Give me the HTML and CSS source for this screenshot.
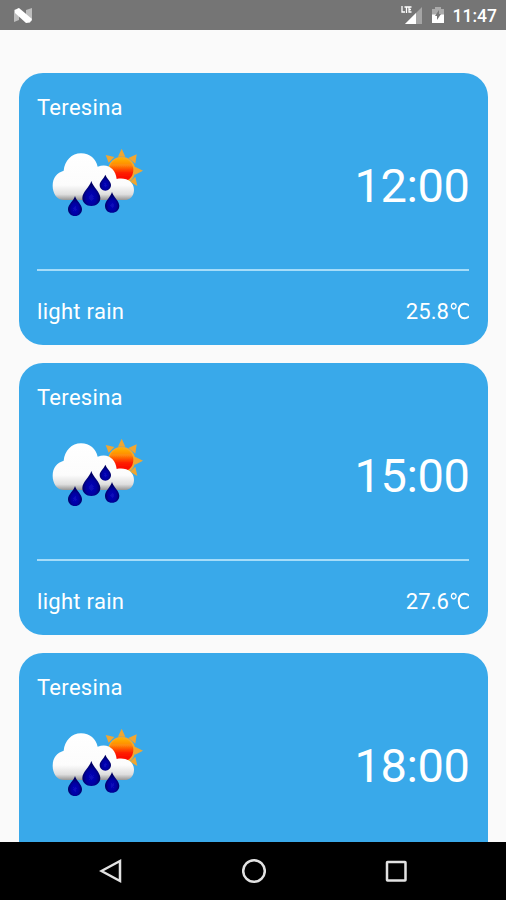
FILE: index.html
```html
<!DOCTYPE html>
<html lang="en">
<head>
<meta charset="utf-8">
<title>Forecast</title>
<link rel="stylesheet" href="styles.css">
</head>
<body>
<svg class="defs" width="0" height="0" aria-hidden="true">
  <defs>
    <linearGradient id="sun" x1="0" y1="0" x2="0" y2="1">
      <stop offset="0" stop-color="#ffb400"/><stop offset=".3" stop-color="#ff8a08"/><stop offset=".62" stop-color="#ff1c00"/><stop offset="1" stop-color="#f80000"/>
    </linearGradient>
    <linearGradient id="cloud" gradientUnits="userSpaceOnUse" x1="0" y1="40" x2="0" y2="180">
      <stop offset="0" stop-color="#fff"/><stop offset=".68" stop-color="#fcfcfc"/><stop offset=".88" stop-color="#dedede"/><stop offset="1" stop-color="#989898"/>
    </linearGradient>
    <radialGradient id="drop" cx=".5" cy=".65" r=".5">
      <stop offset="0" stop-color="#0808c0"/><stop offset=".6" stop-color="#0404a0"/><stop offset="1" stop-color="#000064"/>
    </radialGradient>
    <filter id="soft" x="-10%" y="-10%" width="120%" height="120%"><feGaussianBlur stdDeviation="1.5"/></filter>
    <symbol id="rain" viewBox="0 0 345 255">
      <g filter="url(#soft)">
        <path fill="#f0a632" d="M245 26l11 24H234zM290 43l-4 28-21-17zM309 92l-24 12v-24zM292 138l-22-13 16-15zM197 45l26 6-17 17z"/>
        <circle cx="245" cy="91" r="41" fill="#f5a82c"/>
        <circle cx="244" cy="90" r="36" fill="url(#sun)"/>
        <path fill="url(#cloud)" d="M72 180c-22 0-34-21-34-43 0-24 13-39 33-45 3-30 24-52 52-52 27 0 45 17 50 40 30-12 54 6 57 37 29-6 52 8 52 32 0 19-12 31-28 31z"/>
        <g fill="url(#drop)">
          <path d="M154 123c5 18 27 33 27 51 0 14-12 24-27 24s-27-10-27-24c0-18 22-33 27-51z"/>
          <path d="M196 104c4 11 17 20 17 31 0 10-8 17-17 17s-17-7-17-17c0-11 13-20 17-31z"/>
          <path d="M105 168c4 14 21 26 21 39 0 13-9 21-21 21s-21-8-21-21c0-13 17-25 21-39z"/>
          <path d="M216 156c4 15 22 27 22 41 0 13-10 21-22 21s-21-8-21-21c0-14 17-26 21-41z"/>
        </g>
      </g>
    </symbol>
  </defs>
</svg>
<div class="screen">
  <header class="status">
    <svg class="logo" viewBox="0 0 20 18"><path fill="#bdbdbd" d="M1 4l5-2v12l-5 2zM13 4l6-2v13l-6 1z"/><path fill="#fff" d="M2 4l4-2 13 11-2 3.500-4 .5L2 7z"/></svg>
    <div class="indicators">
      <svg class="signal" viewBox="0 0 24 20"><path fill="#a4a4a4" d="M22 2v17H5z"/><path fill="#fff" d="M16 8v11H5z"/><path d="M2 1v6h3M4.500 2h4M6.500 2v6M11.500 2h-2.500v5h2.500M9 4.500h2" fill="none" stroke="#fff" stroke-width="1.300"/></svg>
      <svg class="battery" viewBox="0 0 12 18"><path fill="#aaa" d="M3 1h6v2h3v6H0V3h3z"/><path fill="#fff" d="M0 8.500h12V17H0z"/><path fill="#777" d="M7 4L3 10h2v4l4-6H7z"/></svg>
      <span class="clock">11:47</span>
    </div>
  </header>
  <main class="list">
    <article class="card">
      <div class="city">Teresina</div>
      <div class="middle"><svg class="weather"><use href="#rain"/></svg><div class="time">12:00</div></div>
      <div class="bottom"><span>light rain</span><span class="temp">25.8<span class="unit">℃</span></span></div>
    </article>
    <article class="card">
      <div class="city">Teresina</div>
      <div class="middle"><svg class="weather"><use href="#rain"/></svg><div class="time">15:00</div></div>
      <div class="bottom"><span>light rain</span><span class="temp">27.6<span class="unit">℃</span></span></div>
    </article>
    <article class="card">
      <div class="city">Teresina</div>
      <div class="middle"><svg class="weather"><use href="#rain"/></svg><div class="time">18:00</div></div>
    </article>
  </main>
  <nav class="nav">
    <svg viewBox="0 0 24 28"><path d="M21 4v20L2.500 14z"/></svg>
    <svg viewBox="0 0 24 28"><circle cx="12" cy="14" r="10.800"/></svg>
    <svg viewBox="0 0 24 28"><rect x="3" y="5" width="18.500" height="18.500" rx=".5"/></svg>
  </nav>
</div>
</body>
</html>
```
FILE: styles.css
```css
* { box-sizing: border-box; }
body { margin: 0; background: #fafafa; font-family: Roboto, "Noto Sans CJK SC", sans-serif; }
.defs { display: block; height: 0; }
.screen { width: 506px; height: 900px; display: flex; flex-direction: column; overflow: hidden; }
.status { flex: none; height: 30px; background: #757575; display: flex; align-items: center; justify-content: space-between; padding: 0 9px 0 13px; }
.logo { width: 20px; height: 18px; }
.indicators { display: flex; align-items: center; }
.signal { width: 24px; height: 20px; margin-right: 8px; }
.battery { width: 12px; height: 18px; margin-right: 9px; }
.clock { color: #fff; font-size: 17.5px; font-weight: 500; line-height: 30px; padding-top: 2px; }
.list { flex: 1; min-height: 0; overflow: hidden; padding: 43px 18px 0 19px; }
.card { height: 271.500px; margin-bottom: 18.500px; padding: 21px 19px 0 18px; border-radius: 24px; background: #39a9ea; color: #fff; }
.city { font-size: 22px; line-height: 28px; letter-spacing: .3px; }
.middle { height: 149px; display: flex; justify-content: space-between; border-bottom: 2px solid #a5dcf9; }
.weather { width: 115px; height: 85px; margin: 18px 0 0 3px; }
.time { font-size: 47px; font-weight: 400; line-height: 56px; margin-top: 35.500px; letter-spacing: -.4px; margin-right: -.5px; }
.bottom { display: flex; justify-content: space-between; font-size: 22px; line-height: 28px; margin-top: 27px; letter-spacing: .3px; }
.temp { display: flex; letter-spacing: .1px; }
.unit { font-family: "DejaVu Sans", "Noto Sans CJK SC", sans-serif; width: 20px; transform: scaleX(.86); transform-origin: left; }
.nav { flex: none; height: 58px; background: #000; display: flex; justify-content: center; align-items: center; gap: 118.500px; padding-left: 1px; }
.nav svg { width: 24px; height: 28px; fill: none; stroke: #e2e2e2; stroke-width: 2.500; }
```
